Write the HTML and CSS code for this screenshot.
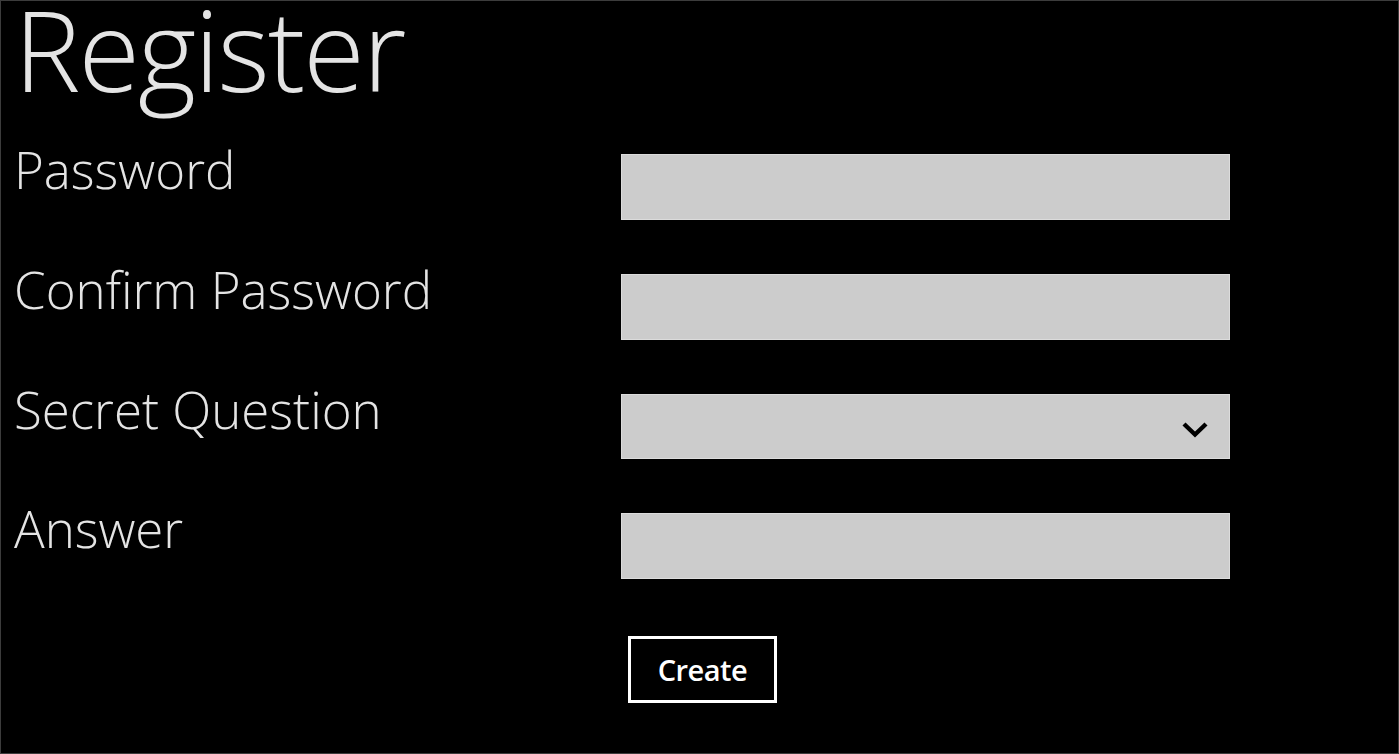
FILE: index.html
```html
<!DOCTYPE html>
<html lang="en">
<head>
<meta charset="utf-8">
<title>Register</title>
<link rel="stylesheet" href="styles.css">
</head>
<body>
<div class="page">
  <h1 class="title">Register</h1>
  <form class="form">
    <label class="label">Password</label>
    <div class="field"></div>
    <label class="label">Confirm Password</label>
    <div class="field"></div>
    <label class="label">Secret Question</label>
    <div class="field select">
      <svg class="chev" width="26" height="18" viewBox="0 0 26 18"><path d="M2 3 L13 13.5 L24 3" fill="none" stroke="#000" stroke-width="4.4" stroke-linecap="butt" stroke-linejoin="miter"/></svg>
    </div>
    <label class="label">Answer</label>
    <div class="field"></div>
    <div></div>
    <div class="actions"><button type="button" class="btn">Create</button></div>
  </form>
</div>
</body>
</html>
```
FILE: styles.css
```css
html, body {
  margin: 0;
  padding: 0;
  background: #000;
}
.page {
  box-sizing: border-box;
  width: 1399px;
  height: 754px;
  border: 1px solid #3c3c3c;
  background: #000;
  color: #e4e4e4;
  font-family: "Open Sans", "Noto Sans", sans-serif;
  overflow: hidden;
}
.title {
  margin: 0;
  padding: 0 0 0 13px;
  font-size: 112px;
  font-weight: 300;
  line-height: 96px;
  height: 153px;
  box-sizing: border-box;
  letter-spacing: -2px;
}
.form {
  display: grid;
  grid-template-columns: 607px 609px;
  row-gap: 54px;
  padding-left: 13px;
}
.label {
  font-size: 51px;
  font-weight: 300;
  line-height: 1;
  margin-top: -10px;
  letter-spacing: 0;
}
.field {
  box-sizing: border-box;
  height: 66px;
  background: #cccccc;
  border: 1px solid #dcdcdc;
  display: flex;
  align-items: center;
  justify-content: flex-end;
}
.select { height: 65px; }
.chev { margin-right: 21px; margin-top: 6px; }
.actions {
  padding-left: 7px;
  margin-top: 3px;
}
.btn {
  box-sizing: border-box;
  width: 149px;
  height: 67px;
  background: #000;
  color: #fff;
  border: 3px solid #fff;
  font-family: "Open Sans", "Noto Sans", sans-serif;
  font-weight: 600;
  font-size: 29px;
  padding: 0;
  letter-spacing: -0.5px;
}
```
